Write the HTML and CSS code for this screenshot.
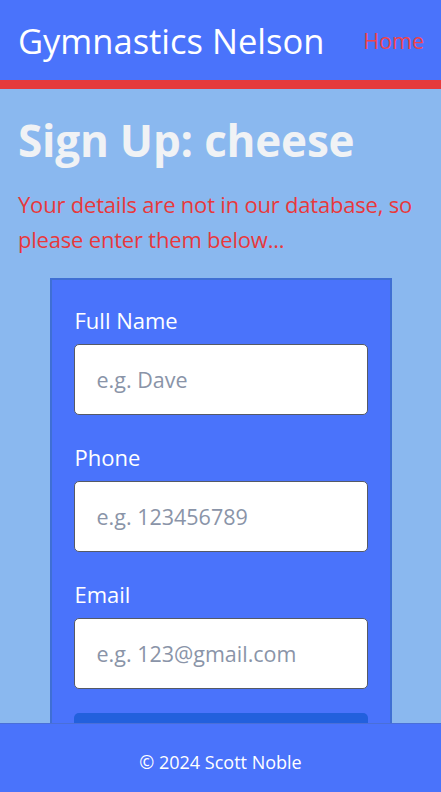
FILE: index.html
```html
<!DOCTYPE html>
<html lang="en">
<head>
<meta charset="utf-8">
<title>Sign Up</title>
<link rel="stylesheet" href="styles.css">
</head>
<body>
<header class="site-header">
  <span class="brand">Gymnastics Nelson</span>
  <a class="nav-link" href="#">Home</a>
</header>
<main class="content">
  <h1 class="title">Sign Up: cheese</h1>
  <p class="notice">Your details are not in our database, so please enter them below...</p>
  <form class="card">
    <div class="field">
      <label class="label" for="name">Full Name</label>
      <input class="input" id="name" type="text" placeholder="e.g. Dave">
    </div>
    <div class="field">
      <label class="label" for="phone">Phone</label>
      <input class="input" id="phone" type="text" placeholder="e.g. 123456789">
    </div>
    <div class="field">
      <label class="label" for="email">Email</label>
      <input class="input" id="email" type="text" placeholder="e.g. 123@gmail.com">
    </div>
    <button class="submit" type="button" aria-label="Sign Up"></button>
  </form>
</main>
<footer class="site-footer">© 2024 Scott Noble</footer>
</body>
</html>
```
FILE: styles.css
```css
html, body {
  margin: 0;
  padding: 0;
}
body {
  background: #8ab8ef;
  font-family: "Open Sans", "Noto Sans", sans-serif;
  min-height: 792px;
}
.site-header {
  height: 80px;
  background: #4a73fb;
  border-bottom: 9px solid #e53a3c;
  display: flex;
  align-items: center;
  justify-content: space-between;
  padding: 0 17px 0 18px;
}
.brand {
  color: #ffffff;
  font-size: 34.5px;
}
.nav-link {
  color: #f0444c;
  font-size: 21.5px;
  text-decoration: none;
}
.content {
  padding: 0 18px 120px;
}
.title {
  margin: 24.5px 0 21px;
  font-size: 44px;
  font-weight: 700;
  color: #f0f2f5;
  line-height: 52.8px;
  letter-spacing: -0.2px;
}
.notice {
  margin: 0 0 21px;
  color: #e8383c;
  font-size: 22px;
  line-height: 35px;
  letter-spacing: -0.2px;
}
.card {
  margin: 0 auto;
  background: #4a73fb;
  border: 2px solid #3f6fd4;
  padding: 25px 22px 24px;
  box-sizing: content-box;
  width: 294px;
  display: flex;
  flex-direction: column;
}
.field {
  display: flex;
  flex-direction: column;
  margin-bottom: 27px;
}
.field:last-of-type {
  margin-bottom: 24px;
}
.label {
  color: #ffffff;
  font-size: 22px;
  margin: 0 0 9px 1px;
  line-height: 30px;
}
.input {
  height: 71px;
  box-sizing: border-box;
  border: 1px solid #555a66;
  border-radius: 5px;
  background: #fff;
  padding: 0 22px;
  font-family: "Open Sans", "Noto Sans", sans-serif;
  font-size: 21.5px;
  color: #333;
}
.input::placeholder {
  color: #8a94a8;
}
.submit {
  height: 60px;
  border: none;
  border-radius: 5px;
  background: #2260dd;
}
.site-footer {
  position: fixed;
  left: 0;
  right: 0;
  bottom: 0;
  height: 69px;
  background: #4a73fb;
  border-top: 1px solid #4a6fd8;
  box-sizing: border-box;
  display: flex;
  align-items: center;
  justify-content: center;
  color: #ffffff;
  font-size: 18px;
  padding-top: 7px;
}
```
